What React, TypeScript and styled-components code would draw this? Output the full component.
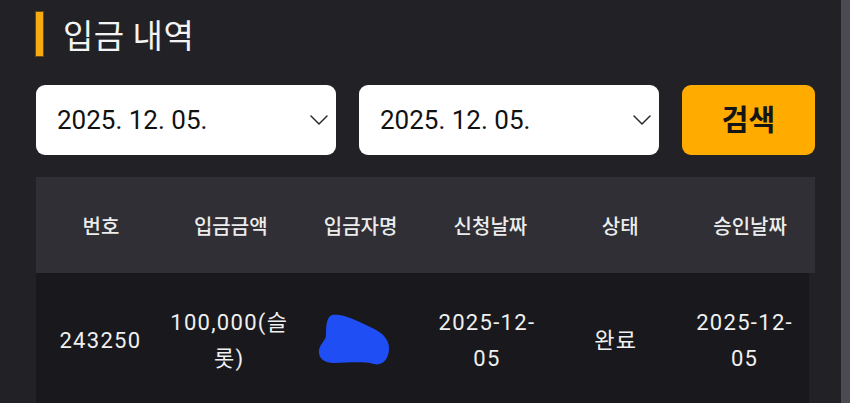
import React from "react";
import styled, { createGlobalStyle } from "styled-components";

const Global = createGlobalStyle`
  html, body { margin: 0; padding: 0; background: #222226; }
  body { font-family: Roboto, "Noto Sans CJK KR", sans-serif; overflow: hidden; }
`;

const Page = styled.div`
  display: flex;
  width: 850px;
  height: 403px;
  background: #222226;
  overflow: hidden;
`;

const Main = styled.div`
  flex: 1;
  padding: 11px 0 0 35px;
  display: flex;
  flex-direction: column;
`;

const ScrollStrip = styled.div`
  width: 9px;
  background: #4b4a52;
`;

const TitleRow = styled.div`
  display: flex;
  align-items: center;
  gap: 19px;
  height: 46px;
`;

const TitleBar = styled.div`
  width: 7px;
  height: 44px;
  background: #f7ab0f;
  border: 1px solid #6a4a08;
`;

const Title = styled.h1`
  margin: 0;
  font-family: "Noto Sans CJK KR", sans-serif;
  font-size: 33px;
  font-weight: 400;
  color: #f4f4f4;
  letter-spacing: 0.5px;
`;

const FilterRow = styled.div`
  display: flex;
  gap: 23px;
  margin-top: 28px;
  margin-left: 1px;
`;

const DateBox = styled.div`
  width: 300px;
  height: 70px;
  box-sizing: border-box;
  background: #ffffff;
  border-radius: 9px;
  display: flex;
  align-items: center;
  justify-content: space-between;
  padding: 0 8px 0 21px;
  font-family: Roboto, sans-serif;
  font-size: 26px;
  color: #111;
`;

const SearchButton = styled.button`
  width: 133px;
  height: 70px;
  border: none;
  border-radius: 9px;
  background: #ffab00;
  color: #151515;
  font-family: "Noto Sans CJK KR", sans-serif;
  font-size: 29px;
  font-weight: 700;
  padding: 0 0 4px;
`;

const Table = styled.div`
  margin-top: 22px;
  margin-left: 1px;
`;

const HeaderRow = styled.div`
  width: 779px;
  height: 96px;
  background: #2f2f35;
  display: grid;
  grid-template-columns: repeat(6, 1fr);
  align-items: center;
`;

const HeaderCell = styled.div`
  text-align: center;
  font-family: "Noto Sans CJK KR", sans-serif;
  font-size: 20px;
  font-weight: 500;
  color: #ececec;
`;

const BodyRow = styled.div`
  width: 773px;
  height: 134px;
  background: #19191d;
  display: grid;
  grid-template-columns: repeat(6, 1fr);
  align-items: center;
`;

const BodyCell = styled.div`
  text-align: center;
  padding: 0 4px;
  font-size: 22px;
  line-height: 36px;
  letter-spacing: 1.3px;
  color: #f0f0f0;
  display: flex;
  justify-content: center;
`;

const CellText = styled.span`
  display: block;
  padding-top: 2px;
`;

const BlobWrap = styled.div`
  margin-right: 9px;
  display: flex;
`;

const Chevron = () => (
  <svg width="18" height="10" viewBox="0 0 18 10" fill="none">
    <path d="M1 1 L9 9 L17 1" stroke="#2a2a2a" strokeWidth="1.5" strokeLinecap="round" strokeLinejoin="round" />
  </svg>
);

const Blob = () => (
  <svg width="72" height="52" viewBox="0 0 72 52">
    <path
      d="M14 1 C24 -1 38 6 50 12 C62 17 72 24 71 36 C70 46 64 52 56 50 C44 47 30 49 16 49 C6 49 0 44 1 36 C2 30 7 27 8 22 C8 14 8 3 14 1 Z"
      fill="#1f4ef5"
    />
  </svg>
);

const headers = ["번호", "입금금액", "입금자명", "신청날짜", "상태", "승인날짜"];

export default function App() {
  return (
    <>
      <Global />
      <Page>
        <Main>
          <TitleRow>
            <TitleBar />
            <Title>입금 내역</Title>
          </TitleRow>
          <FilterRow>
            <DateBox>
              <span>2025. 12. 05.</span>
              <Chevron />
            </DateBox>
            <DateBox>
              <span>2025. 12. 05.</span>
              <Chevron />
            </DateBox>
            <SearchButton>검색</SearchButton>
          </FilterRow>
          <Table>
            <HeaderRow>
              {headers.map((h) => (
                <HeaderCell key={h}>{h}</HeaderCell>
              ))}
            </HeaderRow>
            <BodyRow>
              <BodyCell><CellText>243250</CellText></BodyCell>
              <BodyCell><CellText>100,000(슬롯)</CellText></BodyCell>
              <BodyCell><BlobWrap><Blob /></BlobWrap></BodyCell>
              <BodyCell><CellText>2025-12-05</CellText></BodyCell>
              <BodyCell><CellText>완료</CellText></BodyCell>
              <BodyCell><CellText>2025-12-05</CellText></BodyCell>
            </BodyRow>
          </Table>
        </Main>
        <ScrollStrip />
      </Page>
    </>
  );
}
